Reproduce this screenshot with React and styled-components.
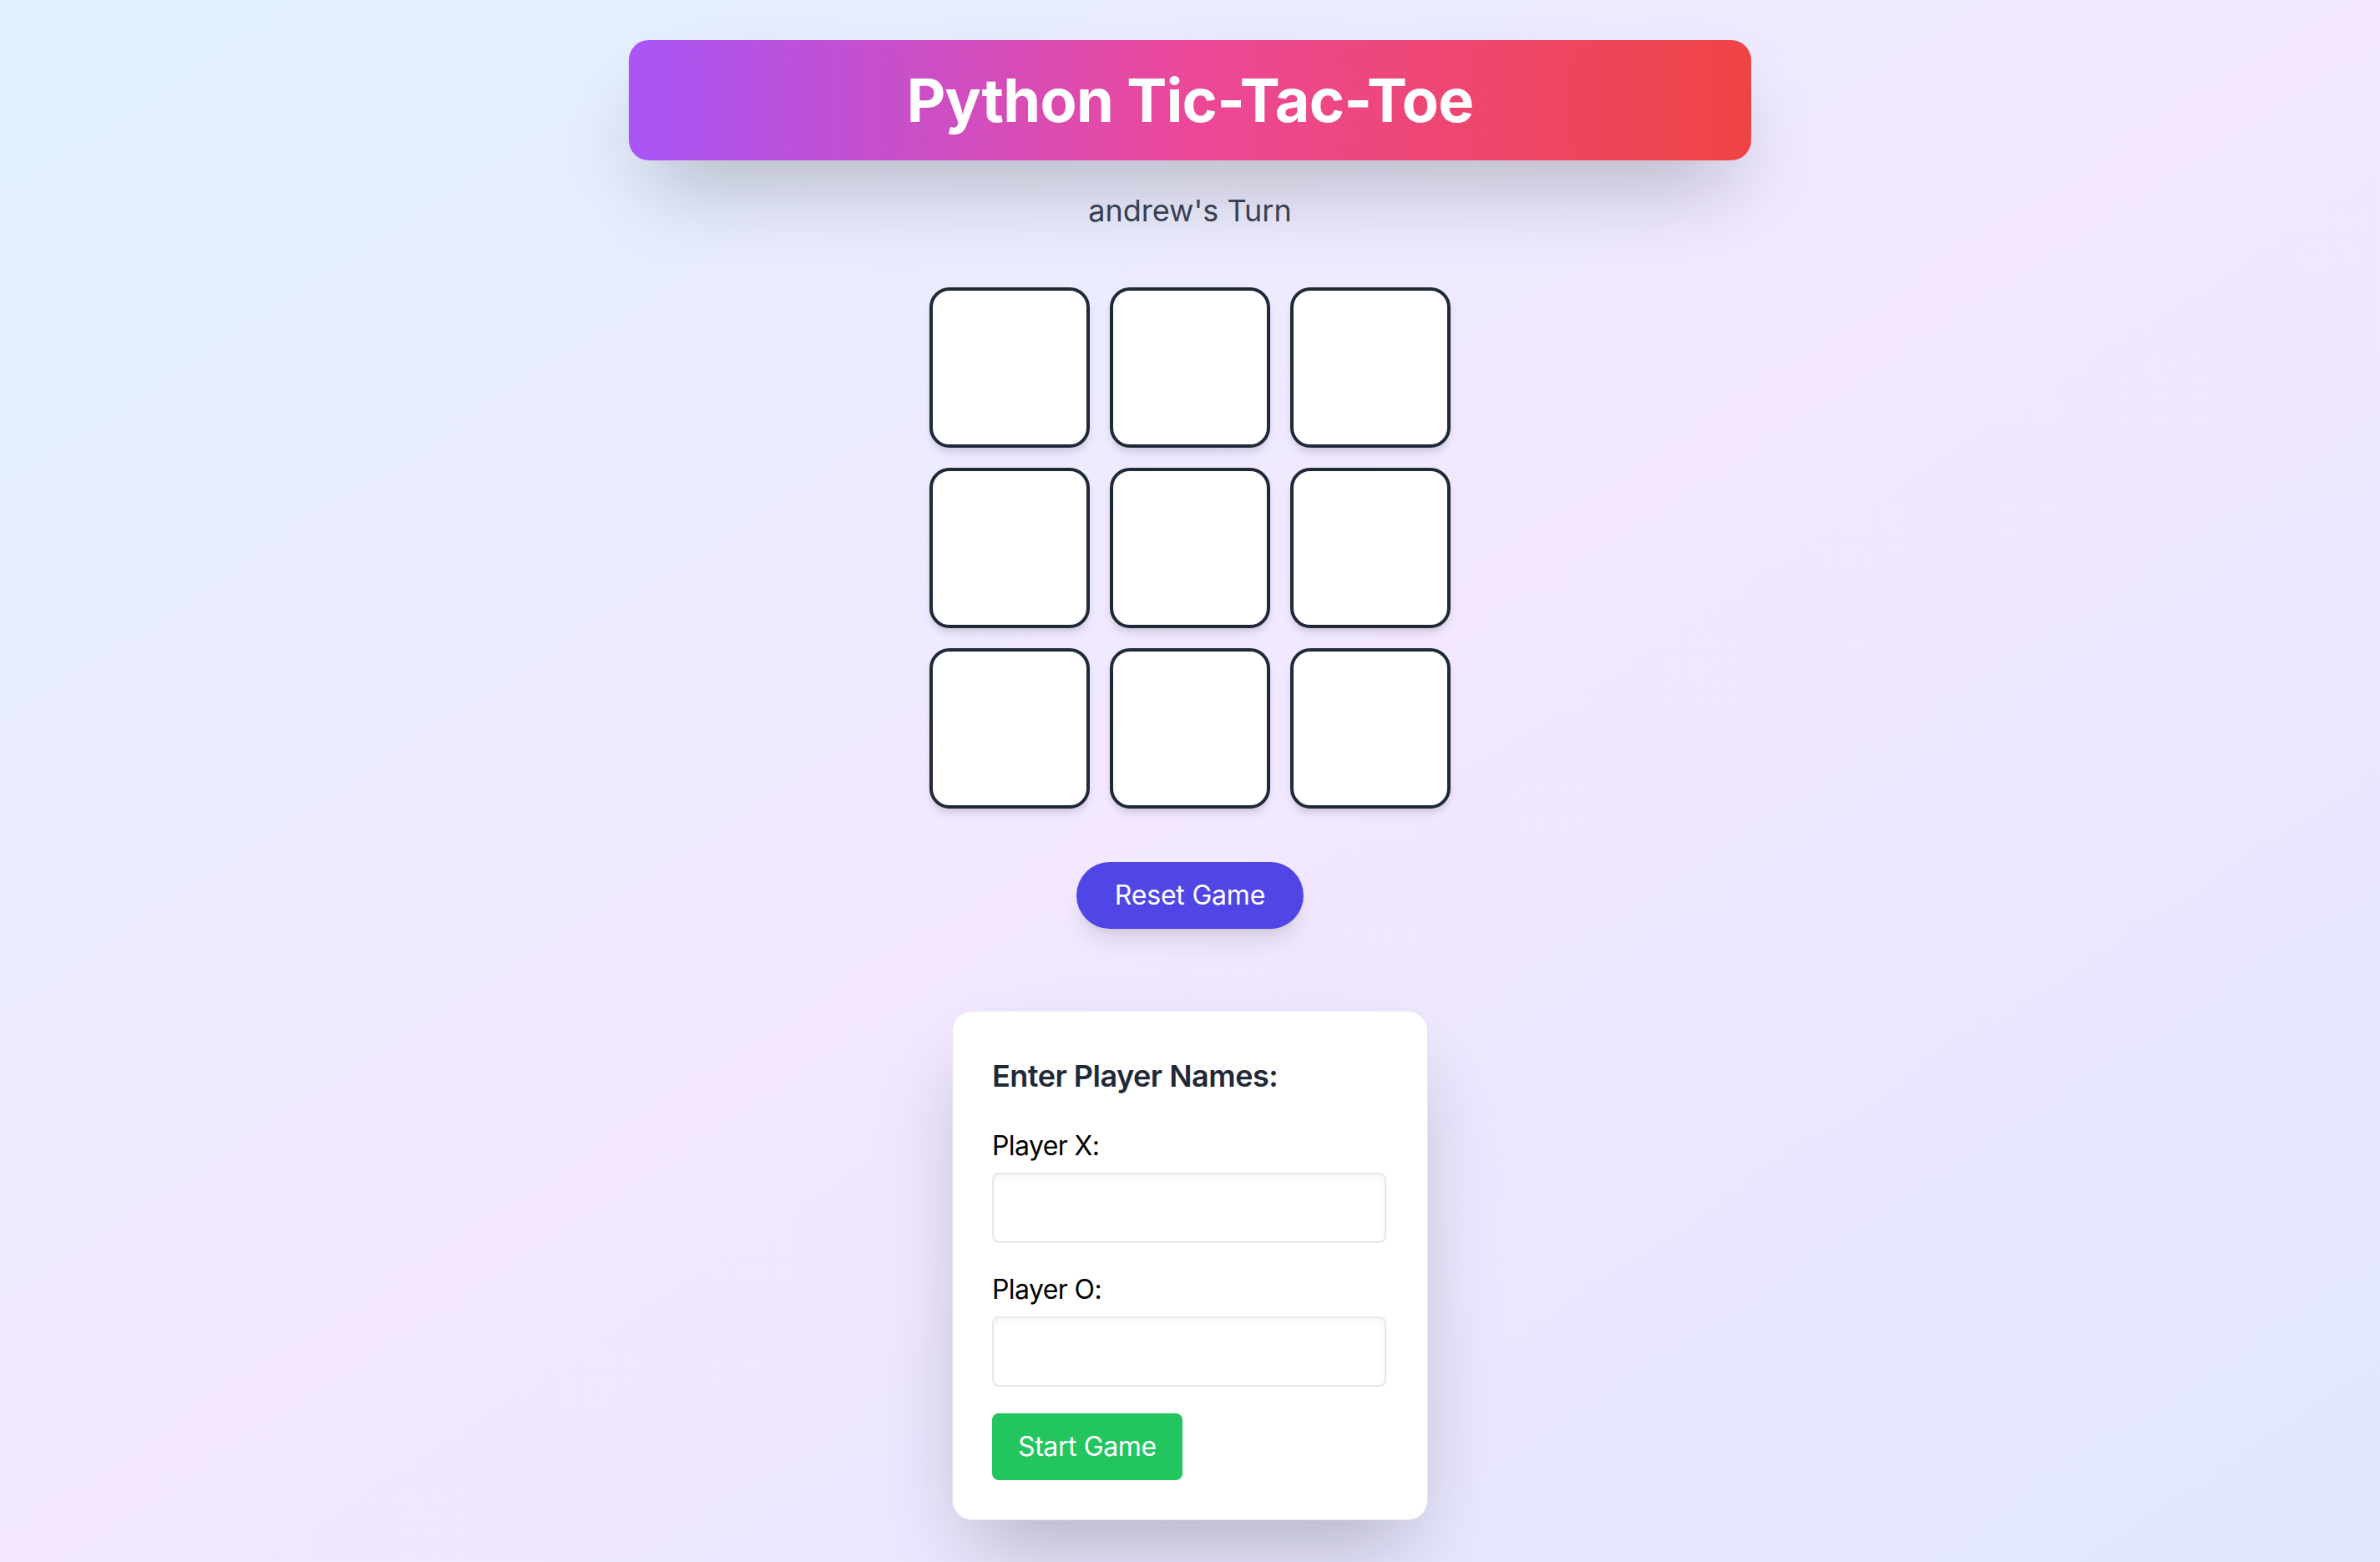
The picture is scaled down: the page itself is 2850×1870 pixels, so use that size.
import React, { useState } from "react";
import styled, { createGlobalStyle } from "styled-components";

const GlobalStyle = createGlobalStyle`
  * { box-sizing: border-box; }
  body {
    margin: 0;
    font-family: Inter, "Noto Sans", "Liberation Sans", sans-serif;
    background: #ffffff;
  }
`;

const Page = styled.div`
  min-height: 100vh;
  padding: 48px 0;
  display: flex;
  flex-direction: column;
  align-items: center;
  background: linear-gradient(to bottom right, #e0f2fe, #f3e8ff, #e0e7ff);
`;

const Banner = styled.header`
  width: 1344px;
  padding: 32px;
  border-radius: 24px;
  background: linear-gradient(to right, #a855f7, #ec4899, #ef4444);
  box-shadow: 0 50px 100px -24px rgba(0, 0, 0, 0.25);
  text-align: center;
`;

const Title = styled.h1`
  margin: 0;
  font-size: 72px;
  line-height: 80px;
  font-weight: 700;
  color: #ffffff;
  letter-spacing: -0.7px;
`;

const Status = styled.p`
  margin: 32px 0 64px;
  font-size: 36px;
  line-height: 56px;
  color: #374151;
`;

const Board = styled.div`
  display: grid;
  grid-template-columns: repeat(3, 192px);
  grid-auto-rows: 192px;
  gap: 24px;
`;

const Cell = styled.button`
  width: 192px;
  height: 192px;
  padding: 0;
  border: 4px solid #1f2937;
  border-radius: 24px;
  background: #ffffff;
  box-shadow: 0 8px 12px -2px rgba(0, 0, 0, 0.1), 0 4px 8px -4px rgba(0, 0, 0, 0.1);
  font-family: inherit;
  font-size: 96px;
  font-weight: 700;
  color: #1f2937;
  cursor: pointer;
`;

const PillButton = styled.button`
  margin-top: 64px;
  padding: 16px 46px;
  border: none;
  border-radius: 9999px;
  background: #4f46e5;
  color: #ffffff;
  font-family: inherit;
  font-size: 32px;
  line-height: 48px;
  letter-spacing: -0.2px;
  box-shadow: 0 20px 30px -6px rgba(0, 0, 0, 0.1), 0 8px 12px -8px rgba(0, 0, 0, 0.1);
  cursor: pointer;
`;

const Card = styled.form`
  margin-top: 98px;
  width: 570px;
  padding: 49px 47px 47px;
  border-radius: 24px;
  border: 1px solid #e5e7eb;
  background: #ffffff;
  box-shadow: 0 50px 100px -24px rgba(0, 0, 0, 0.25);
`;

const CardTitle = styled.h2`
  margin: 0 0 32px;
  font-size: 36px;
  line-height: 56px;
  font-weight: 600;
  color: #1f2937;
  letter-spacing: -0.5px;
`;

const Field = styled.div`
  margin-bottom: 32px;
`;

const Label = styled.label`
  display: block;
  margin-bottom: 8px;
  font-size: 32px;
  line-height: 48px;
  color: #000000;
  letter-spacing: -0.6px;
`;

const TextInput = styled.input`
  display: block;
  width: 472px;
  height: 84px;
  padding: 8px 16px;
  border: 2px solid #e5e7eb;
  border-radius: 8px;
  background: #ffffff;
  box-shadow: inset 0 4px 8px rgba(0, 0, 0, 0.04);
  font-family: inherit;
  font-size: 32px;
  outline: none;
`;

const StartButton = styled.button`
  display: block;
  height: 80px;
  padding: 0 31px;
  border: none;
  border-radius: 8px;
  background: #22c55e;
  color: #ffffff;
  font-family: inherit;
  font-size: 32px;
  line-height: 48px;
  letter-spacing: -0.4px;
  cursor: pointer;
`;

export default function App() {
  const [board, setBoard] = useState(Array(9).fill(""));
  const [names, setNames] = useState({ x: "", o: "" });
  const [turn, setTurn] = useState("X");

  const playerName = turn === "X" ? names.x || "andrew" : names.o || "O";

  const handleCellClick = (index) => {
    if (board[index]) return;
    const next = board.map((value, i) => (i === index ? turn : value));
    setBoard(next);
    setTurn(turn === "X" ? "O" : "X");
  };

  const handleReset = () => {
    setBoard(Array(9).fill(""));
    setTurn("X");
  };

  return (
    <Page>
      <GlobalStyle />
      <Banner>
        <Title>Python Tic-Tac-Toe</Title>
      </Banner>
      <Status>{playerName}'s Turn</Status>
      <Board>
        {board.map((value, index) => (
          <Cell key={index} onClick={() => handleCellClick(index)}>
            {value}
          </Cell>
        ))}
      </Board>
      <PillButton onClick={handleReset}>Reset Game</PillButton>
      <Card onSubmit={(e) => e.preventDefault()}>
        <CardTitle>Enter Player Names:</CardTitle>
        <Field>
          <Label htmlFor="player-x">Player X:</Label>
          <TextInput
            id="player-x"
            value={names.x}
            onChange={(e) => setNames({ ...names, x: e.target.value })}
          />
        </Field>
        <Field>
          <Label htmlFor="player-o">Player O:</Label>
          <TextInput
            id="player-o"
            value={names.o}
            onChange={(e) => setNames({ ...names, o: e.target.value })}
          />
        </Field>
        <StartButton type="submit">Start Game</StartButton>
      </Card>
    </Page>
  );
}
